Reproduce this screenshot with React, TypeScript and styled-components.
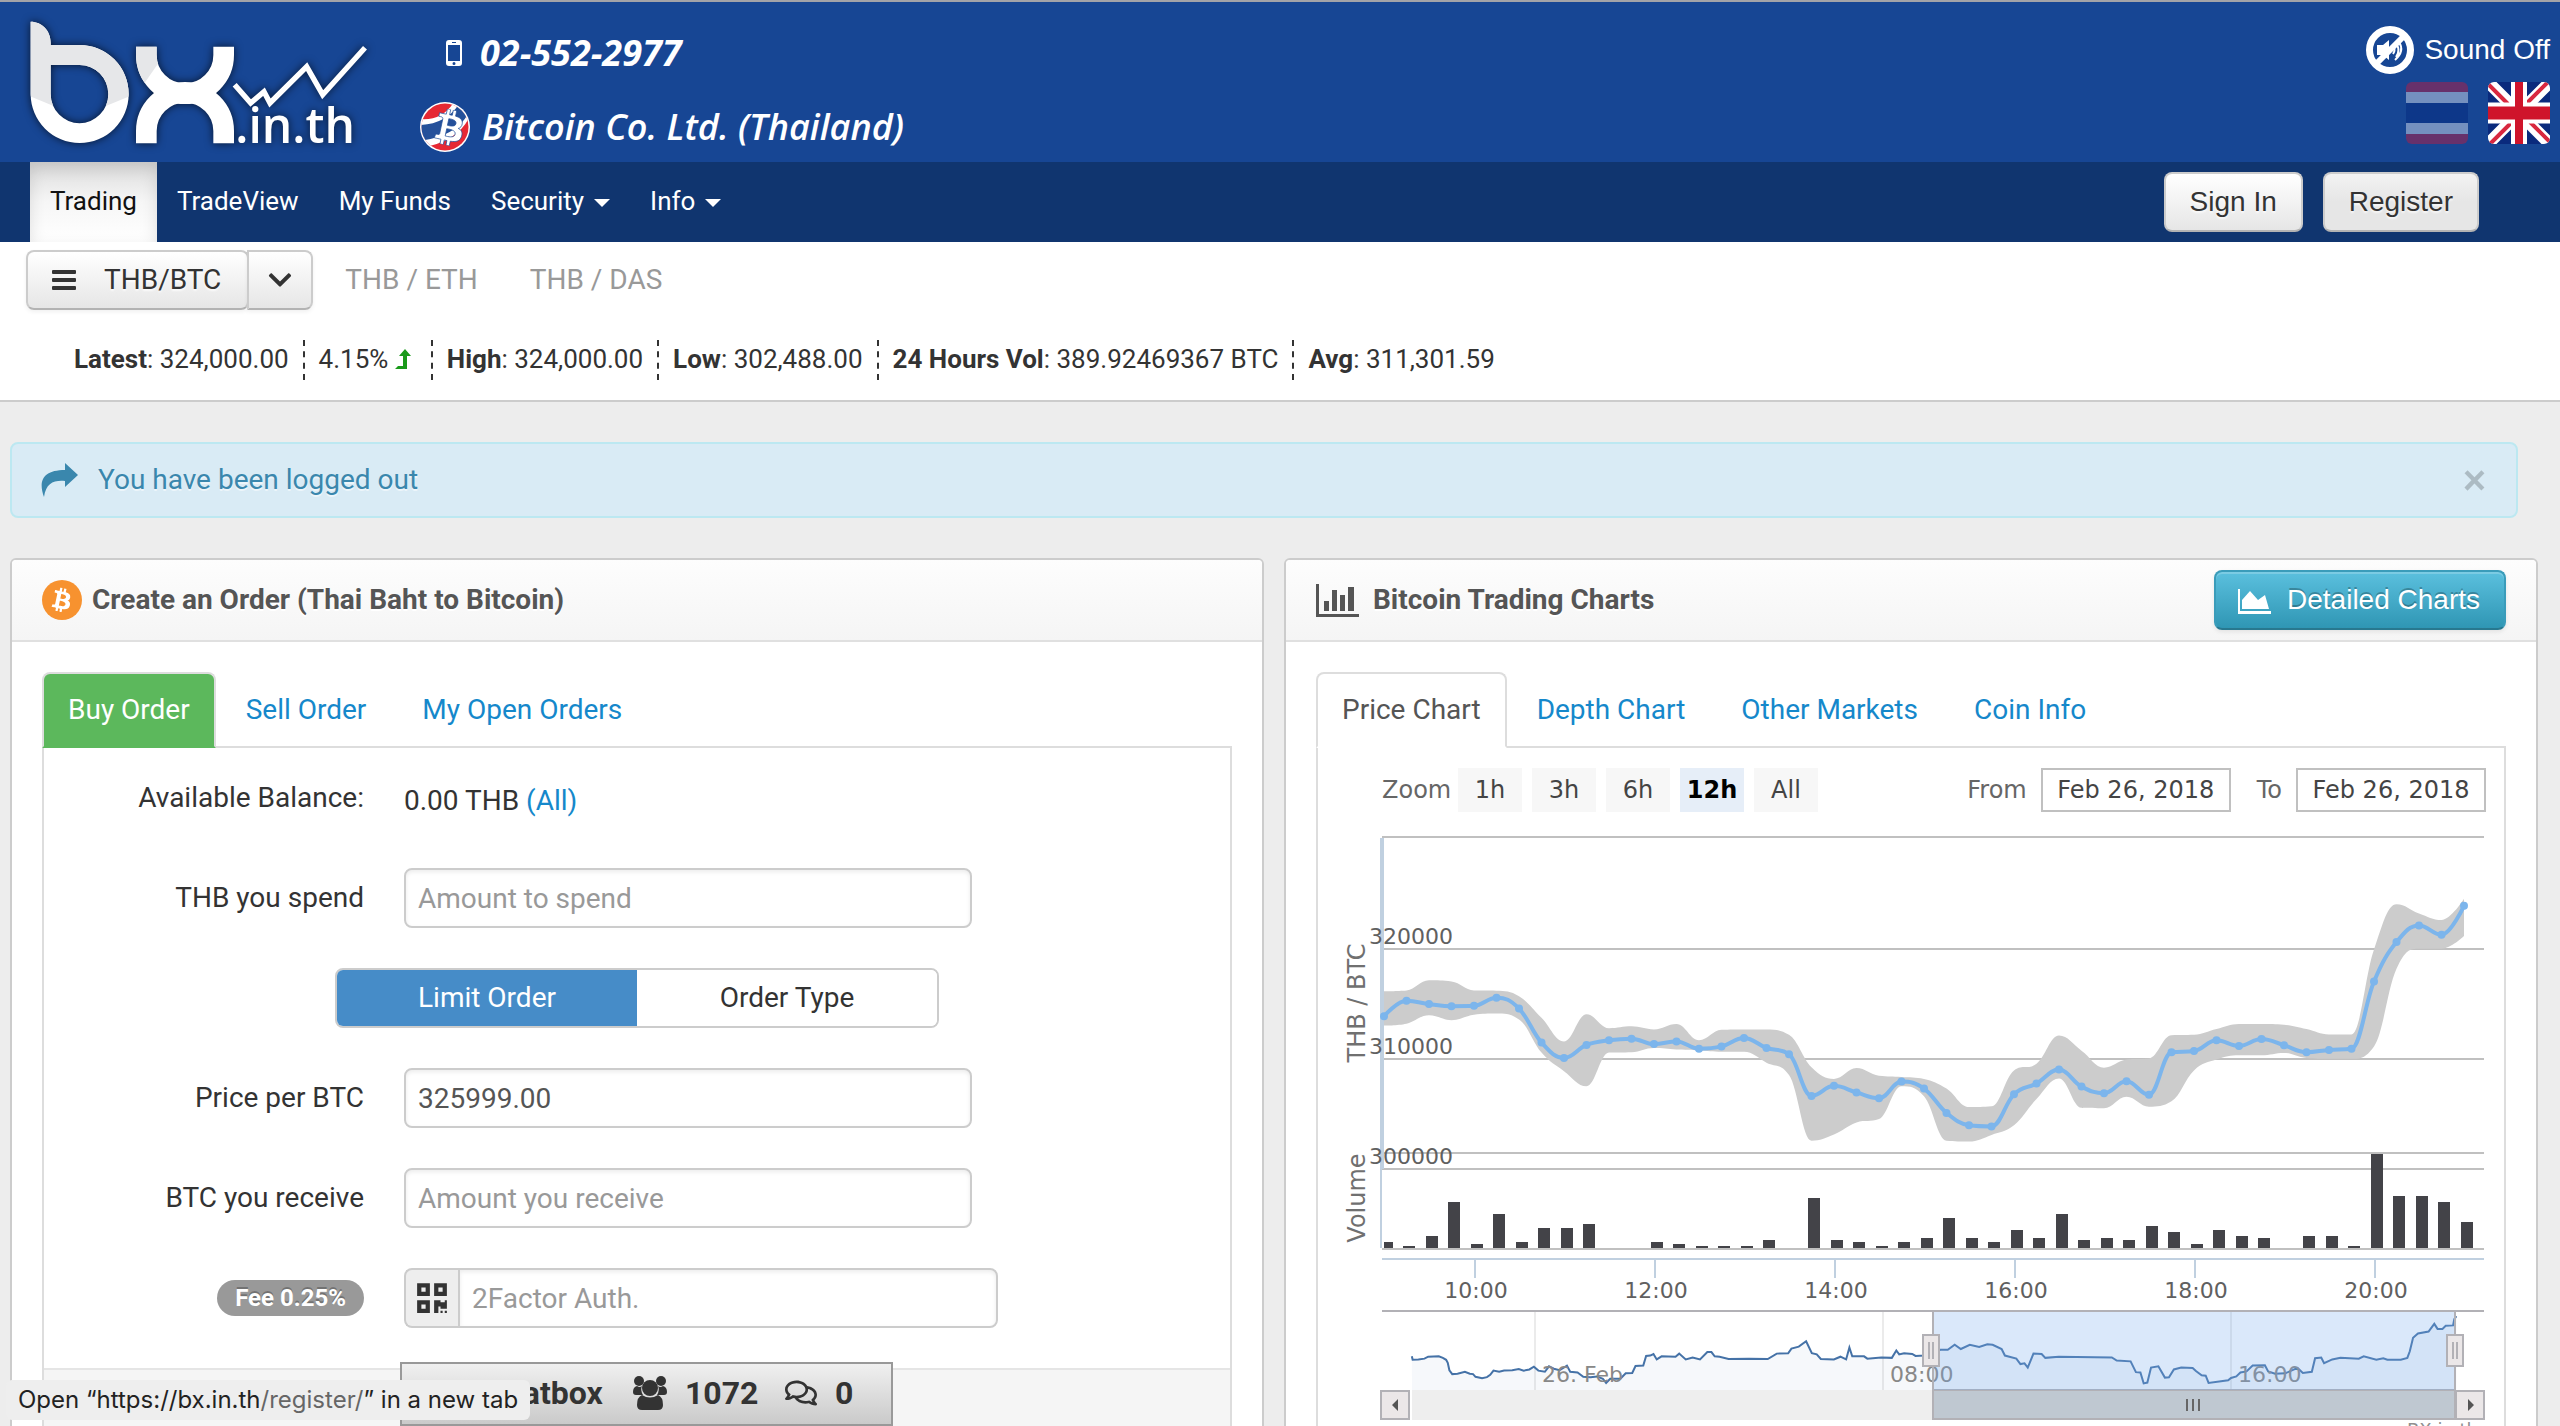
import React from "react";
import styled, { createGlobalStyle, css } from "styled-components";
import {
  FaBtc,
  FaChevronDown,
  FaComment,
  FaQrcode,
  FaRegComments,
} from "react-icons/fa";

const GlobalStyle = createGlobalStyle`
  *, *::before, *::after { box-sizing: border-box; }
  body {
    margin: 0;
    overflow: hidden;
    background: #ededed;
    color: #333;
    font-family: Roboto, "Liberation Sans", sans-serif;
    font-size: 28px;
    line-height: 40px;
  }
  a { color: #1588cb; text-decoration: none; }
  button, input { font: inherit; margin: 0; }
  h1, h2, p { margin: 0; }
`;

const HELVETICA = `"Liberation Sans", Arial, sans-serif`;
const LUCIDA = `"DejaVu Sans", sans-serif`;

/* ---------- header ---------- */

const Page = styled.div`
  min-height: 100vh;
`;

const Header = styled.header`
  display: flex;
  justify-content: space-between;
  height: 162px;
  padding: 18px 10px 0 30px;
  border-top: 2px solid #a3a3a8;
  background: #174694;
  color: #fff;
`;

const Brand = styled.div`
  display: flex;
  gap: 50px;
`;

const LogoLink = styled.a`
  display: block;
  height: 130px;
`;

const LogoSvg = styled.svg`
  display: block;
  overflow: visible;
  filter: drop-shadow(0 0 4px rgba(0, 0, 0, 0.7));
`;

const Contacts = styled.div`
  display: flex;
  flex-direction: column;
  gap: 22px;
  padding-top: 7px;
  font: italic 600 36px/52px "Open Sans", "Noto Sans", sans-serif;
`;

const Contact = styled.div<{ $indent?: boolean }>`
  display: flex;
  align-items: center;
  gap: ${(p) => (p.$indent ? "18px" : "12px")};
  padding-left: ${(p) => (p.$indent ? "26px" : "0")};
  font-weight: ${(p) => (p.$indent ? 700 : 600)};
`;

const HeaderTools = styled.div`
  display: flex;
  flex-direction: column;
  align-items: flex-end;
  gap: 8px;
  padding-top: 6px;
`;

const SoundButton = styled.button`
  display: flex;
  align-items: center;
  gap: 10px;
  padding: 0;
  border: 0;
  background: none;
  color: #fff;
  font-family: ${HELVETICA};
  line-height: 48px;
`;

const Flags = styled.div`
  display: flex;
  gap: 20px;
`;

const Flag = styled.a<{ $faded?: boolean }>`
  display: block;
  width: 62px;
  height: 62px;
  border-radius: 6px;
  overflow: hidden;
  opacity: ${(p) => (p.$faded ? 0.4 : 1)};
`;

/* ---------- navigation ---------- */

const Nav = styled.nav`
  display: flex;
  align-items: center;
  justify-content: space-between;
  height: 80px;
  padding: 0 81px 0 30px;
  background: #10356f;
`;

const NavList = styled.div`
  display: flex;
`;

const NavLink = styled.a<{ $active?: boolean }>`
  display: flex;
  align-items: center;
  gap: 10px;
  height: 80px;
  padding: 0 20px 2px;
  color: #fff;
  font-size: 26px;
  ${(p) =>
    p.$active &&
    css`
      color: #111;
      background: linear-gradient(#dcdcdc, #f6f6f6 50%, #fff);
      box-shadow: inset 0 6px 16px rgba(0, 0, 0, 0.12);
    `}
`;

const Caret = styled.span`
  border: 8px solid transparent;
  border-top-color: #fff;
  border-bottom: 0;
  margin-top: 4px;
`;

const NavButtons = styled.div`
  display: flex;
  gap: 20px;
`;

const buttonFace = css`
  border: 2px solid #ccc;
  border-bottom-color: #b3b3b3;
  border-radius: 8px;
  background: linear-gradient(#fff, #e6e6e6);
  color: #333;
  text-shadow: 0 2px 2px rgba(255, 255, 255, 0.75);
`;

const NavButton = styled.button<{ $hover?: boolean }>`
  ${buttonFace}
  height: 60px;
  padding: 0 24px;
  font-family: ${HELVETICA};
  ${(p) => p.$hover && "background: linear-gradient(#f2f2f2, #e6e6e6 50%);"}
`;

/* ---------- market bar ---------- */

const MarketBar = styled.section`
  padding: 8px 26px 20px;
  border-bottom: 2px solid #ccc;
  background: #fff;
`;

const Markets = styled.div`
  display: flex;
  align-items: center;
  gap: 52px;
`;

const Split = styled.div`
  display: flex;
  margin-right: -20px;
`;

const MarketButton = styled.button`
  ${buttonFace}
  display: flex;
  align-items: center;
  gap: 28px;
  height: 60px;
  padding: 0 26px 0 24px;
  box-shadow: 0 2px 4px rgba(0, 0, 0, 0.06);
`;

const MarketToggle = styled(MarketButton)`
  padding: 0 18px;
  margin-left: -2px;
  border-radius: 0 8px 8px 0;
`;

const MarketLink = styled.a`
  color: #999;
`;

const Stats = styled.div`
  display: flex;
  height: 40px;
  margin-top: 30px;
  padding-left: 34px;
  font-size: 26px;
`;

const Stat = styled.div`
  display: flex;
  align-items: center;
  padding: 0 14px 2px;
  white-space: pre;
  & + & {
    border-left: 2px dashed #333;
  }
  svg {
    margin-right: 6px;
  }
`;

/* ---------- content ---------- */

const Content = styled.main`
  padding: 40px 22px 0 10px;
`;

const Alert = styled.div`
  display: flex;
  align-items: center;
  justify-content: space-between;
  height: 76px;
  margin-right: 20px;
  padding: 0 30px 0 28px;
  border: 2px solid #bce8f1;
  border-radius: 8px;
  background: #d9ebf5;
  color: #3a87ad;
  text-shadow: 0 2px 0 rgba(255, 255, 255, 0.5);
`;

const AlertText = styled.div`
  display: flex;
  align-items: center;
  gap: 20px;
`;

const CloseButton = styled.button`
  padding: 0;
  border: 0;
  background: none;
  color: #000;
  opacity: 0.2;
  font: bold 40px/40px ${HELVETICA};
`;

const Columns = styled.div`
  display: grid;
  grid-template-columns: 1fr 1fr;
  gap: 20px;
  margin-top: 40px;
`;

const Card = styled.section`
  min-width: 0;
  border: 2px solid #ccc;
  border-radius: 6px;
  background: #fff;
`;

const CardHead = styled.div`
  display: flex;
  align-items: center;
  justify-content: space-between;
  height: 82px;
  padding: 0 30px;
  border-bottom: 2px solid #e0e0e0;
  border-radius: 4px 4px 0 0;
  background: linear-gradient(#fdfdfd, #f5f5f5);
`;

const CardTitle = styled.h2<{ $gap: number }>`
  display: flex;
  align-items: center;
  gap: ${(p) => p.$gap}px;
  color: #555;
  font-size: 28px;
  font-weight: 700;
  text-shadow: 0 2px 0 #fff;
`;

const InfoButton = styled.button`
  display: flex;
  align-items: center;
  gap: 16px;
  height: 60px;
  padding: 0 24px 0 22px;
  border: 2px solid #3a9cba;
  border-bottom-color: #28788f;
  border-radius: 8px;
  background: linear-gradient(#5bc0de, #2f96b4);
  box-shadow: inset 0 2px 0 rgba(255, 255, 255, 0.2), 0 2px 4px rgba(0, 0, 0, 0.08);
  color: #fff;
  font-family: ${HELVETICA};
  text-shadow: 0 -2px 0 rgba(0, 0, 0, 0.25);
`;

const CardBody = styled.div`
  padding: 30px 30px 0;
`;

const Tabs = styled.div`
  display: flex;
  gap: 4px;
  border-bottom: 2px solid #ddd;
`;

const Tab = styled.a<{ $active?: boolean; $green?: boolean }>`
  height: 76px;
  margin-bottom: -2px;
  padding: 16px 24px;
  border: 2px solid transparent;
  border-radius: 8px 8px 0 0;
  ${(p) =>
    p.$active &&
    css`
      border-color: #ddd;
      border-bottom-color: #fff;
      background: #fff;
      color: #555;
    `}
  ${(p) =>
    p.$green &&
    css`
      border-bottom-color: #5cb85c;
      background: #5cb85c;
      color: #fff;
    `}
`;

const TabPane = styled.div`
  border: 2px solid #ddd;
  border-top: 0;
`;

/* ---------- order form ---------- */

const Fields = styled.div`
  display: flex;
  flex-direction: column;
  gap: 40px;
  padding: 20px 0 40px;
`;

const Field = styled.div`
  display: grid;
  grid-template-columns: 320px 1fr;
  column-gap: 40px;
  align-items: center;
  height: 60px;
`;

const Label = styled.label`
  justify-self: end;
`;

const Balance = styled.p`
  padding-top: 6px;
`;

const TextInput = styled.input`
  width: 568px;
  height: 60px;
  padding: 0 12px;
  border: 2px solid #ccc;
  border-radius: 8px;
  background: #fff;
  box-shadow: inset 0 2px 4px rgba(0, 0, 0, 0.08);
  color: #555;
  outline: 0;
  &::placeholder {
    color: #999;
    opacity: 1;
  }
`;

const AddonGroup = styled.div`
  display: flex;
`;

const Addon = styled.span`
  display: flex;
  align-items: center;
  justify-content: center;
  width: 54px;
  height: 60px;
  border: 2px solid #ccc;
  border-right: 0;
  border-radius: 8px 0 0 8px;
  background: #eee;
`;

const AddonInput = styled(TextInput)`
  width: 540px;
  border-radius: 0 8px 8px 0;
`;

const Badge = styled.span`
  display: block;
  padding: 0 18px;
  border-radius: 18px;
  background: #999;
  color: #fff;
  font-size: 24px;
  font-weight: 700;
  line-height: 36px;
  text-shadow: 0 -2px 0 rgba(0, 0, 0, 0.25);
`;

const Toggle = styled.div`
  display: grid;
  grid-template-columns: 1fr 1fr;
  width: 604px;
  height: 60px;
  margin-left: 291px;
  border: 2px solid #ccc;
  border-radius: 8px;
  overflow: hidden;
`;

const ToggleButton = styled.button<{ $on?: boolean }>`
  border: 0;
  background: ${(p) => (p.$on ? "#468cc8" : "#fff")};
  color: ${(p) => (p.$on ? "#fff" : "#333")};
`;

const FormFoot = styled.div`
  height: 120px;
  border-top: 2px solid #e5e5e5;
  background: #f5f5f5;
`;

/* ---------- chart ---------- */

const RangeBar = styled.div`
  display: flex;
  justify-content: space-between;
  padding: 20px 18px 0 64px;
  color: #666;
  font: 24px/44px ${LUCIDA};
`;

const RangeGroup = styled.div<{ $gap: number }>`
  display: flex;
  gap: ${(p) => p.$gap}px;
`;

const ZoomLabel = styled.span`
  width: 66px;
`;

const ZoomButton = styled.button<{ $on?: boolean }>`
  width: 64px;
  height: 44px;
  padding: 0;
  border: 0;
  background: ${(p) => (p.$on ? "#e6eef8" : "#f7f7f7")};
  color: ${(p) => (p.$on ? "#000" : "#444")};
  font-weight: ${(p) => (p.$on ? 700 : 400)};
`;

const DateLabel = styled.label`
  display: flex;
  gap: 14px;
`;

const DateInput = styled.input`
  width: 190px;
  height: 44px;
  padding: 0;
  border: 2px solid #c0c0c0;
  background: #fff;
  color: #444;
  text-align: center;
`;

const ChartSvg = styled.svg`
  display: block;
  width: 100%;
  font-family: ${LUCIDA};
`;

/* ---------- overlays ---------- */

const Chatbox = styled.button`
  position: fixed;
  left: 400px;
  bottom: 0;
  display: flex;
  align-items: center;
  width: 493px;
  height: 64px;
  padding: 0 0 2px 34px;
  border: 2px solid #999;
  background: linear-gradient(#f0f0f0, #cacaca);
  color: #333;
  font-size: 32px;
  font-weight: 700;
`;

const ChatPart = styled.span<{ $width: number }>`
  display: flex;
  align-items: center;
  gap: 18px;
  width: ${(p) => p.$width}px;
`;

const StatusBar = styled.div`
  position: fixed;
  left: 6px;
  bottom: 6px;
  padding: 0 12px;
  border-radius: 6px;
  background: #eee;
  color: #222;
  font: 24px/40px Inter, Roboto, sans-serif;
`;

const Muted = styled.span`
  color: #666;
`;

/* ---------- drawings ---------- */

const B_SHAPE =
  "M62 37C96 37 122 64 122 100V107H209A147 147 0 0 1 356 254A147 147 0 0 1 62 254ZM122 167V254A86 87 0 0 0 295 254A86 87 0 0 0 209 167Z";

function Logo() {
  return (
    <LogoSvg width="340" height="126" viewBox="60 32 1020 378" aria-label="bx.in.th">
      <defs>
        <clipPath id="shadeB">
          <path d="M50 20H370V256L209 322L50 257Z" />
        </clipPath>
        <clipPath id="shadeX">
          <path d="M370 100H445V162L400 226H370Z" />
        </clipPath>
      </defs>
      <path d={B_SHAPE} fill="#fff" fillRule="evenodd" />
      <path d={B_SHAPE} fill="#e6e7e9" fillRule="evenodd" clipPath="url(#shadeB)" />
      <g fill="none" stroke="#fff" strokeWidth="62">
        <path d="M409 112V137A116 116 0 0 0 641 137V112" />
        <path d="M409 402V365A116 116 0 0 1 641 365V402" />
        <path d="M409 112V137A116 116 0 0 0 641 137V112" stroke="#e6e7e9" clipPath="url(#shadeX)" />
        <path d="M674 226L722 281L762 247L780 281L890 172L938 256L1065 115" strokeWidth="16" />
      </g>
      <text x="676" y="402" fill="#fff" fontFamily="Open Sans" fontWeight="600" fontSize="144">
        .in.th
      </text>
    </LogoSvg>
  );
}

function PhoneIcon() {
  return (
    <svg width="16" height="26" viewBox="0 0 16 26">
      <path
        fill="#fff"
        fillRule="evenodd"
        d="M3 0h10a3 3 0 0 1 3 3v20a3 3 0 0 1-3 3H3a3 3 0 0 1-3-3V3a3 3 0 0 1 3-3zM2 5v16h12V5zM6 2v1h4V2zM8 22a1.500 1.500 0 1 0 0 3a1.500 1.500 0 1 0 0-3z"
      />
    </svg>
  );
}

function ThaiCoin() {
  return (
    <svg width="50" height="50" viewBox="0 0 50 50">
      <defs>
        <clipPath id="coin">
          <circle cx="25" cy="25" r="23.500" />
        </clipPath>
      </defs>
      <circle cx="25" cy="25" r="25" fill="#fff" />
      <g clipPath="url(#coin)">
        <rect width="50" height="50" fill="#e62833" />
        <path d="M0 17Q22 19 34 0H50V14Q38 40 0 46Z" fill="#fff" />
        <path d="M0 23Q26 22 39 2L48 12Q36 34 0 39Z" fill="#24509a" />
      </g>
      <g transform="rotate(12 27 25)">
        <FaBtc x="12" y="7" size={36} color="#fff" stroke="#24509a" strokeWidth="10" />
      </g>
    </svg>
  );
}

function BitcoinIcon() {
  return (
    <svg width="40" height="40" viewBox="0 0 40 40">
      <circle cx="20" cy="20" r="20" fill="#f7922f" />
      <g transform="rotate(12 20 20)">
        <FaBtc x="8" y="8" size={24} color="#fff" />
      </g>
    </svg>
  );
}

function SoundOffIcon() {
  return (
    <svg width="48" height="48" viewBox="0 0 48 48" fill="none" stroke="#fff">
      <circle cx="24" cy="24" r="20.500" strokeWidth="7" />
      <path d="M11 19h6l6-5v20l-6-5h-6z" fill="#fff" stroke="none" />
      <path d="M27 20q3 4 0 8M30 18q5 6 0 13M33 16q6 9-4 18" strokeWidth="2" />
      <path d="M10 38L38 10" strokeWidth="6" />
    </svg>
  );
}

function ThaiFlag() {
  return (
    <svg width="62" height="62" viewBox="0 0 62 62">
      <rect width="62" height="62" fill="#e0122f" />
      <rect y="10" width="62" height="42" fill="#fff" />
      <rect y="21" width="62" height="20" fill="#00217a" />
    </svg>
  );
}

function UkFlag() {
  return (
    <svg width="62" height="62" viewBox="0 0 62 62">
      <rect width="62" height="62" fill="#0a2a7d" />
      <path d="M0 0L62 62M62 0L0 62" stroke="#fff" strokeWidth="12" />
      <path d="M0 2L20 22M60 0L38 22M2 62L24 40M42 40L62 60" stroke="#d8283f" strokeWidth="4" />
      <path d="M31 0V62" stroke="#fff" strokeWidth="16" />
      <path d="M0 31H62" stroke="#fff" strokeWidth="21" />
      <path d="M31 0V62" stroke="#cf142b" strokeWidth="8" />
      <path d="M0 31H62" stroke="#cf142b" strokeWidth="13" />
    </svg>
  );
}

function MenuIcon() {
  return (
    <svg width="24" height="20" viewBox="0 0 24 20" fill="#333">
      <rect width="24" height="4" rx="1" />
      <rect y="8" width="24" height="4" rx="1" />
      <rect y="16" width="24" height="4" rx="1" />
    </svg>
  );
}

function UpIcon() {
  return (
    <svg width="16" height="20" viewBox="0 0 16 20" fill="#1a9a1a">
      <path d="M10 0L16 7H12V20H0L3 17H8V7H4Z" />
    </svg>
  );
}

function ShareIcon() {
  return (
    <svg width="38" height="34" viewBox="0 0 38 34" fill="#3a87ad">
      <path d="M25 0L38 12L25 24V18C14 17 6 20 4 34C-2 18 3 7 25 7Z" />
    </svg>
  );
}

function BarChartIcon() {
  return (
    <svg width="43" height="33" viewBox="0 0 43 33" fill="#555">
      <path d="M0 0H3V30H43V33H0Z" />
      <path d="M8 17h5v10H8zM16 6h5v21h-5zM24 11h5v16h-5zM32 3h6v24h-6z" />
    </svg>
  );
}

function AreaChartIcon() {
  return (
    <svg width="33" height="27" viewBox="0 0 33 27" fill="#fff">
      <path d="M0 2H2V24H33V27H0Z" />
      <path d="M4 22V13L12 4L20 13L27 8L31 22Z" />
    </svg>
  );
}

function PeopleIcon() {
  return (
    <svg width="34" height="34" viewBox="0 0 34 34" fill="#333">
      <circle cx="6" cy="5" r="5" />
      <circle cx="28" cy="5" r="5" />
      <circle cx="17" cy="12" r="8" />
      <path d="M4 10Q7 12 9 10Q7 14 10 19H3Q0 19 0 16Q0 11 4 10ZM30 10Q27 12 25 10Q27 14 24 19H31Q34 19 34 16Q34 11 30 10Z" />
      <path d="M9 19Q17 24 25 19Q30 21 30 29Q30 34 25 34H9Q4 34 4 29Q4 21 9 19Z" />
    </svg>
  );
}

/* ---------- chart data ---------- */

const PRICE = [
  508, 468, 476, 482, 481, 460, 488, 576, 616, 582, 570, 566, 580, 573, 592, 586, 564, 590, 606,
  714, 688, 705, 720, 677, 695, 758, 790, 793, 710, 682, 646, 690, 707, 676, 711, 601, 598, 570,
  585, 567, 583, 601, 595, 592, 418, 316, 273, 297, 222,
];
const HIGH = [
  443, 441, 415, 418, 441, 442, 456, 512, 573, 503, 539, 534, 542, 528, 570, 543, 542, 542, 556,
  640, 670, 642, 662, 665, 670, 695, 743, 741, 648, 631, 558, 597, 641, 620, 617, 557, 556, 541,
  528, 528, 530, 541, 555, 555, 335, 218, 242, 259, 204,
];
const LOW = [
  532, 527, 505, 518, 504, 501, 516, 602, 650, 689, 602, 601, 590, 594, 596, 600, 600, 628, 660,
  830, 814, 783, 774, 689, 715, 830, 832, 815, 790, 722, 669, 745, 746, 716, 742, 728, 648, 620,
  609, 609, 603, 616, 618, 618, 586, 385, 333, 333, 300,
];
const VOLUME = [
  15, 5, 31, 119, 10, 88, 15, 51, 51, 62, 0, 0, 15, 10, 5, 5, 5, 20, 0, 129, 20, 15, 5, 15, 25, 77,
  25, 15, 46, 25, 88, 20, 25, 20, 56, 41, 10, 46, 31, 25, 0, 31, 31, 5, 243, 134, 134, 119, 67,
];
const OVERVIEW = [
  274, 1388, 276, 1397, 290, 1396, 305, 1394, 314, 1389, 340, 1388, 350, 1392, 358, 1397, 362, 1405,
  366, 1424, 373, 1434, 386, 1433, 404, 1428, 416, 1433, 424, 1434, 430, 1441, 446, 1445, 458, 1442,
  466, 1436, 474, 1425, 488, 1428, 500, 1425, 520, 1424, 536, 1421, 548, 1425, 562, 1422, 573, 1415,
  584, 1425, 600, 1428, 610, 1414, 622, 1420, 636, 1424, 654, 1412, 662, 1428, 680, 1430, 694, 1441,
  712, 1442, 728, 1440, 742, 1446, 750, 1457, 760, 1446, 785, 1446, 798, 1432, 814, 1431, 822, 1413,
  841, 1412, 848, 1387, 858, 1386, 866, 1382, 874, 1396, 886, 1388, 920, 1389, 929, 1381, 945, 1396,
  962, 1391, 980, 1396, 998, 1377, 1008, 1377, 1016, 1388, 1028, 1389, 1050, 1395, 1100, 1394, 1146,
  1395, 1168, 1381, 1196, 1380, 1204, 1368, 1222, 1363, 1240, 1349, 1254, 1380, 1266, 1383, 1276,
  1395, 1308, 1396, 1324, 1389, 1338, 1396, 1346, 1365, 1353, 1388, 1382, 1388, 1390, 1394, 1424,
  1391, 1450, 1392, 1461, 1373, 1468, 1383, 1480, 1380, 1500, 1382, 1508, 1387, 1530, 1386, 1569,
  1371, 1587, 1371, 1604, 1358, 1619, 1369, 1641, 1358, 1664, 1364, 1684, 1357, 1697, 1358, 1719,
  1369, 1727, 1386, 1755, 1394, 1765, 1408, 1775, 1406, 1783, 1417, 1797, 1381, 1817, 1382, 1826,
  1392, 1859, 1389, 1989, 1391, 2001, 1399, 2035, 1401, 2048, 1429, 2059, 1430, 2067, 1458, 2076,
  1456, 2085, 1417, 2103, 1414, 2119, 1443, 2129, 1442, 2141, 1422, 2159, 1417, 2187, 1418, 2195,
  1426, 2209, 1437, 2219, 1438, 2226, 1457, 2274, 1450, 2281, 1444, 2294, 1440, 2304, 1430, 2319,
  1427, 2334, 1412, 2364, 1411, 2372, 1427, 2389, 1433, 2414, 1432, 2444, 1418, 2457, 1431, 2479,
  1428, 2487, 1393, 2502, 1391, 2509, 1406, 2529, 1396, 2549, 1392, 2594, 1394, 2606, 1388, 2637,
  1397, 2654, 1393, 2664, 1397, 2697, 1397, 2713, 1392, 2719, 1375, 2727, 1340, 2739, 1329, 2765,
  1324, 2779, 1304, 2787, 1317, 2799, 1317, 2807, 1309, 2825, 1308, 2828, 1292, 2833, 1284,
];

type Point = [number, number];

const STEP = 22.5;
const PLOT_LEFT = 64;
const PLOT_RIGHT = 1166;

const scaleY = (v: number) => 8 + v / 2.588;
const toPoints = (values: number[]): Point[] =>
  values.map((v, i) => [PLOT_LEFT + 2 + i * STEP, scaleY(v)]);

/* Cubic spline whose control points never overshoot a neighbouring value. */
function spline(points: Point[], start: string) {
  let out = `${start}${points[0][0]} ${points[0][1]}`;
  let [outX, outY] = points[0];
  for (let i = 1; i < points.length; i++) {
    const [x, y] = points[i];
    const prev = points[i - 1];
    const next = points[i + 1];
    let inX = x;
    let inY = y;
    let nextOutX = x;
    let nextOutY = y;
    if (next) {
      inX = (1.5 * x + prev[0]) / 2.5;
      inY = (1.5 * y + prev[1]) / 2.5;
      nextOutX = (1.5 * x + next[0]) / 2.5;
      nextOutY = (1.5 * y + next[1]) / 2.5;
      const shift = ((nextOutY - inY) * (nextOutX - x)) / (nextOutX - inX) + y - nextOutY;
      inY += shift;
      nextOutY += shift;
      if (inY > prev[1] && inY > y) {
        inY = Math.max(prev[1], y);
        nextOutY = 2 * y - inY;
      } else if (inY < prev[1] && inY < y) {
        inY = Math.min(prev[1], y);
        nextOutY = 2 * y - inY;
      }
      if (nextOutY > next[1] && nextOutY > y) {
        nextOutY = Math.max(next[1], y);
        inY = 2 * y - nextOutY;
      } else if (nextOutY < next[1] && nextOutY < y) {
        nextOutY = Math.min(next[1], y);
        inY = 2 * y - nextOutY;
      }
    }
    out += `C${outX} ${outY} ${inX} ${inY} ${x} ${y}`;
    outX = nextOutX;
    outY = nextOutY;
  }
  return out;
}

const pricePoints = toPoints(PRICE);
const band = spline(toPoints(HIGH), "M") + spline(toPoints(LOW).reverse(), "L") + "Z";

const overviewLine = OVERVIEW.reduce(
  (d, v, i) => d + (i % 2 ? `${scaleY(v)}` : `${i ? "L" : "M"}${v / 2.45 - 18} `),
  ""
);

const TICKS = ["10:00", "12:00", "14:00", "16:00", "18:00", "20:00"];
const OVERVIEW_TICKS: [string, number][] = [
  ["26. Feb", 217],
  ["08:00", 565],
  ["16:00", 913],
];

function Handle({ x }: { x: number }) {
  return (
    <g>
      <rect x={x - 8} y="523" width="16" height="31" fill="#ebe7e8" stroke="#b2b1b6" strokeWidth="2" />
      <path d={`M${x - 2} 530V547M${x + 2} 530V547`} stroke="#b2b1b6" strokeWidth="2" />
    </g>
  );
}

function PriceChart() {
  return (
    <ChartSvg viewBox="0 0 1186 640" role="img" aria-label="THB / BTC price and volume">
      <g stroke="#c0c0c0" strokeWidth="2">
        <path d={`M${PLOT_LEFT} 25H${PLOT_RIGHT}M${PLOT_LEFT} 137H${PLOT_RIGHT}M${PLOT_LEFT} 247H${PLOT_RIGHT}`} />
        <path d={`M${PLOT_LEFT} 341H${PLOT_RIGHT}M${PLOT_LEFT} 357H${PLOT_RIGHT}M${PLOT_LEFT} 437H${PLOT_RIGHT}`} />
      </g>
      <path d="M64 26V357" stroke="#c0d0e0" strokeWidth="4" />
      <path d="M63 341V436" stroke="#c0d0e0" strokeWidth="2" />
      <path d={`M${PLOT_LEFT} 447H${PLOT_RIGHT}`} stroke="#c0d0e0" strokeWidth="2" />

      {VOLUME.map((v, i) => {
        const left = Math.max(PLOT_LEFT + 2, Math.round(62.5 + i * STEP));
        const right = Math.round(74.5 + i * STEP);
        const height = Math.round(v / 2.588);
        return <rect key={i} x={left} y={436 - height} width={right - left} height={height} fill="#434348" />;
      })}

      <path d={band} fill="#ccc" />
      <path d={spline(pricePoints, "M")} fill="none" stroke="#7cb5ec" strokeWidth="4" />
      {pricePoints.map(([x, y], i) => (
        <circle key={i} cx={x} cy={y} r="4" fill="#7cb5ec" />
      ))}

      <g fill="#606060" fontSize="22">
        <text x="51" y="132">320000</text>
        <text x="51" y="242">310000</text>
        <text x="51" y="352">300000</text>
      </g>
      <g fill="#707070" fontSize="24" textAnchor="middle">
        <text transform="translate(47 191) rotate(-90)">THB / BTC</text>
        <text transform="translate(47 386) rotate(-90)">Volume</text>
      </g>

      {TICKS.map((label, i) => (
        <g key={label}>
          <path d={`M${157 + i * 180} 447V466`} stroke="#c0d0e0" strokeWidth="2" />
          <text x={158 + i * 180} y="486" fill="#606060" fontSize="22" textAnchor="middle">
            {label}
          </text>
        </g>
      ))}

      {OVERVIEW_TICKS.map(([label, x]) => (
        <path key={label} d={`M${x} 500V578`} stroke="#ebebeb" strokeWidth="2" />
      ))}
      <path d={`${overviewLine}V578H94Z`} fill="#4572a7" fillOpacity="0.05" />
      <path d={overviewLine} fill="none" stroke="#4572a7" strokeWidth="2" />
      <g fill="#888" fontSize="22">
        {OVERVIEW_TICKS.map(([label, x]) => (
          <text key={label} x={x + 7} y="570">
            {label}
          </text>
        ))}
      </g>
      <rect x="94" y="578" width="1044" height="30" fill="#eee" />
      <rect x="615" y="578" width="522" height="29" fill="#bfc8d1" stroke="#b2b1b6" strokeWidth="2" />
      <rect x="615" y="500" width="522" height="78" fill="#78aaeb" fillOpacity="0.27" />
      <path d={`M${PLOT_LEFT} 499H${PLOT_RIGHT}M615 499V607M1137 499V607`} stroke="#b2b1b6" strokeWidth="2" />
      <path d="M869 587V599M875 587V599M881 587V599" stroke="#666" strokeWidth="2" />
      <g fill="#ebe7e8" stroke="#b2b1b6" strokeWidth="2">
        <rect x="63" y="579" width="28" height="28" />
        <rect x="1138" y="579" width="28" height="28" />
      </g>
      <path d="M80 587V599L74 593ZM1150 587V599L1156 593Z" fill="#555" />
      <Handle x={613} />
      <Handle x={1137} />
      <text x="1160" y="624" fill="#909090" fontSize="18" textAnchor="end">
        BX.in.th
      </text>
    </ChartSvg>
  );
}

/* ---------- page ---------- */

export default function App() {
  return (
    <Page>
      <GlobalStyle />
      <Header>
        <Brand>
          <LogoLink href="#home">
            <Logo />
          </LogoLink>
          <Contacts>
            <Contact $indent>
              <PhoneIcon />
              02-552-2977
            </Contact>
            <Contact>
              <ThaiCoin />
              Bitcoin Co. Ltd. (Thailand)
            </Contact>
          </Contacts>
        </Brand>
        <HeaderTools>
          <SoundButton type="button">
            <SoundOffIcon />
            Sound Off
          </SoundButton>
          <Flags>
            <Flag href="#th" $faded aria-label="Thai">
              <ThaiFlag />
            </Flag>
            <Flag href="#en" aria-label="English">
              <UkFlag />
            </Flag>
          </Flags>
        </HeaderTools>
      </Header>

      <Nav>
        <NavList>
          <NavLink href="#trading" $active>Trading</NavLink>
          <NavLink href="#tradeview">TradeView</NavLink>
          <NavLink href="#funds">My Funds</NavLink>
          <NavLink href="#security">Security<Caret /></NavLink>
          <NavLink href="#info">Info<Caret /></NavLink>
        </NavList>
        <NavButtons>
          <NavButton type="button">Sign In</NavButton>
          <NavButton type="button" $hover>Register</NavButton>
        </NavButtons>
      </Nav>

      <MarketBar>
        <Markets>
          <Split>
            <MarketButton type="button">
              <MenuIcon />
              THB/BTC
            </MarketButton>
            <MarketToggle type="button" aria-label="More markets">
              <FaChevronDown size={26} />
            </MarketToggle>
          </Split>
          <MarketLink href="#eth">THB / ETH</MarketLink>
          <MarketLink href="#das">THB / DAS</MarketLink>
        </Markets>
        <Stats>
          <Stat><b>Latest</b>: 324,000.00</Stat>
          <Stat>4.15% <UpIcon /></Stat>
          <Stat><b>High</b>: 324,000.00</Stat>
          <Stat><b>Low</b>: 302,488.00</Stat>
          <Stat><b>24 Hours Vol</b>: 389.92469367 BTC</Stat>
          <Stat><b>Avg</b>: 311,301.59</Stat>
        </Stats>
      </MarketBar>

      <Content>
        <Alert role="status">
          <AlertText>
            <ShareIcon />
            You have been logged out
          </AlertText>
          <CloseButton type="button" aria-label="Close">×</CloseButton>
        </Alert>

        <Columns>
          <Card>
            <CardHead>
              <CardTitle $gap={10}>
                <BitcoinIcon />
                Create an Order (Thai Baht to Bitcoin)
              </CardTitle>
            </CardHead>
            <CardBody>
              <Tabs>
                <Tab href="#buy" $active $green>Buy Order</Tab>
                <Tab href="#sell">Sell Order</Tab>
                <Tab href="#open">My Open Orders</Tab>
              </Tabs>
              <TabPane>
                <Fields>
                  <Field>
                    <Label as="span">Available Balance:</Label>
                    <Balance>0.00 THB <a href="#all">(All)</a></Balance>
                  </Field>
                  <Field>
                    <Label htmlFor="spend">THB you spend</Label>
                    <TextInput id="spend" placeholder="Amount to spend" />
                  </Field>
                  <Toggle>
                    <ToggleButton type="button" $on>Limit Order</ToggleButton>
                    <ToggleButton type="button">Order Type</ToggleButton>
                  </Toggle>
                  <Field>
                    <Label htmlFor="price">Price per BTC</Label>
                    <TextInput id="price" defaultValue="325999.00" />
                  </Field>
                  <Field>
                    <Label htmlFor="receive">BTC you receive</Label>
                    <TextInput id="receive" placeholder="Amount you receive" />
                  </Field>
                  <Field>
                    <Label htmlFor="twofactor">
                      <Badge>Fee 0.25%</Badge>
                    </Label>
                    <AddonGroup>
                      <Addon><FaQrcode size={34} /></Addon>
                      <AddonInput id="twofactor" placeholder="2Factor Auth." />
                    </AddonGroup>
                  </Field>
                </Fields>
                <FormFoot />
              </TabPane>
            </CardBody>
          </Card>

          <Card>
            <CardHead>
              <CardTitle $gap={14}>
                <BarChartIcon />
                Bitcoin Trading Charts
              </CardTitle>
              <InfoButton type="button">
                <AreaChartIcon />
                Detailed Charts
              </InfoButton>
            </CardHead>
            <CardBody>
              <Tabs>
                <Tab href="#price" $active>Price Chart</Tab>
                <Tab href="#depth">Depth Chart</Tab>
                <Tab href="#other">Other Markets</Tab>
                <Tab href="#coin">Coin Info</Tab>
              </Tabs>
              <TabPane>
                <RangeBar>
                  <RangeGroup $gap={10}>
                    <ZoomLabel>Zoom</ZoomLabel>
                    <ZoomButton type="button">1h</ZoomButton>
                    <ZoomButton type="button">3h</ZoomButton>
                    <ZoomButton type="button">6h</ZoomButton>
                    <ZoomButton type="button" $on>12h</ZoomButton>
                    <ZoomButton type="button">All</ZoomButton>
                  </RangeGroup>
                  <RangeGroup $gap={26}>
                    <DateLabel>From<DateInput defaultValue="Feb 26, 2018" /></DateLabel>
                    <DateLabel>To<DateInput defaultValue="Feb 26, 2018" /></DateLabel>
                  </RangeGroup>
                </RangeBar>
                <PriceChart />
              </TabPane>
            </CardBody>
          </Card>
        </Columns>
      </Content>

      <Chatbox type="button">
        <ChatPart $width={197}><FaComment size={30} />Chatbox</ChatPart>
        <ChatPart $width={152}><PeopleIcon />1072</ChatPart>
        <ChatPart $width={100}><FaRegComments size={32} />0</ChatPart>
      </Chatbox>
      <StatusBar>
        Open “https://bx.in.th<Muted>/register/</Muted>” in a new tab
      </StatusBar>
    </Page>
  );
}
